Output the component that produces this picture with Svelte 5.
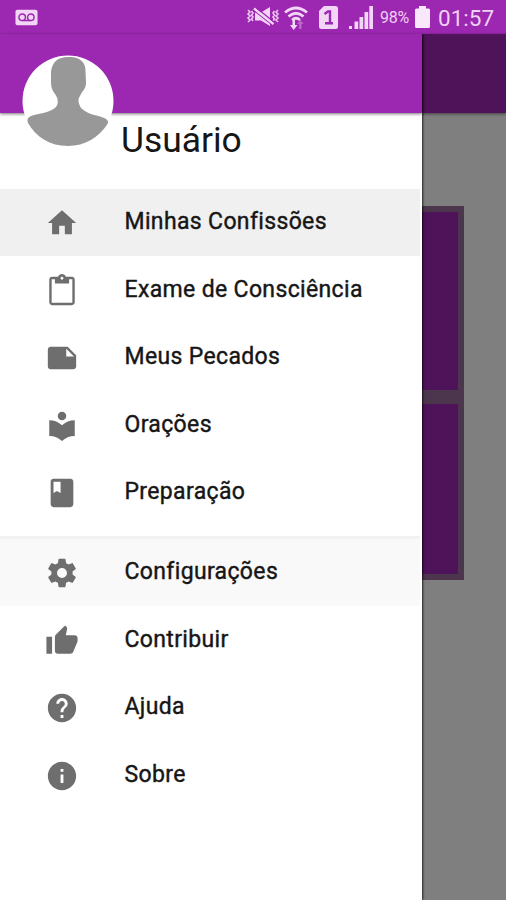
<script>
  const home = 'M10 20v-6h4v6h5v-8h3L12 3 2 12h3v8z';
  const clipboard =
    'M19 2h-4.180C14.400.840 13.300 0 12 0c-1.300 0-2.400.840-2.820 2H5c-1.100 0-2 .9-2 2v16c0 1.100.9 2 2 2h14c1.100 0 2-.9 2-2V4c0-1.100-.9-2-2-2zm-7 0c.55 0 1 .45 1 1s-.45 1-1 1-1-.45-1-1 .45-1 1-1zm7.300 18.300H4.700V3.700H7v3h10v-3h2.300z';
  const note = 'M22 10l-6-6H4c-1.100 0-2 .9-2 2v12.010c0 1.100.9 1.990 2 1.990l16-.01c1.100 0 2-.89 2-1.990v-8zm-7-4.500l5.500 5.500H15V5.500z';
  const reader =
    'M12 11.550C9.640 9.350 6.480 8 3 8v11c3.480 0 6.640 1.350 9 3.550 2.360-2.190 5.520-3.550 9-3.550V8c-3.480 0-6.640 1.350-9 3.550zM12 8c1.660 0 3-1.340 3-3s-1.340-3-3-3-3 1.340-3 3 1.340 3 3 3z';
  const book = 'M18 2H6c-1.100 0-2 .9-2 2v16c0 1.100.9 2 2 2h12c1.100 0 2-.9 2-2V4c0-1.100-.9-2-2-2zM6 4h5v8l-2.500-1.500L6 12V4z';
  const gear =
    'M19.430 12.980c.04-.32.070-.64.070-.98s-.03-.66-.07-.98l2.110-1.650c.19-.15.240-.42.120-.64l-2-3.460c-.12-.22-.39-.3-.61-.22l-2.490 1c-.52-.4-1.080-.73-1.690-.98l-.38-2.650C14.460 2.180 14.250 2 14 2h-4c-.25 0-.46.180-.49.420l-.38 2.650c-.61.250-1.170.590-1.690.980l-2.490-1c-.23-.09-.49 0-.61.220l-2 3.460c-.13.220-.07.490.120.640l2.110 1.650c-.04.320-.07.650-.07.980s.03.660.070.980l-2.110 1.650c-.19.150-.24.420-.12.640l2 3.460c.12.220.390.300.610.220l2.490-1c.52.400 1.080.730 1.690.980l.38 2.650c.03.240.240.420.490.420h4c.25 0 .46-.18.490-.42l.38-2.650c.61-.25 1.170-.59 1.690-.98l2.490 1c.23.090.490 0 .61-.22l2-3.460c.12-.22.070-.49-.12-.64l-2.110-1.650zM12 15.500c-1.930 0-3.500-1.570-3.500-3.500s1.570-3.500 3.500-3.500 3.500 1.570 3.500 3.500-1.570 3.500-3.500 3.500z';
  const thumb =
    'M1 21h4V9H1v12zm22-11c0-1.100-.9-2-2-2h-6.310l.95-4.570.03-.32c0-.41-.17-.79-.44-1.060L14.170 1 7.590 7.590C7.220 7.950 7 8.450 7 9v10c0 1.100.9 2 2 2h9c.83 0 1.540-.5 1.840-1.220l3.020-7.050c.09-.23.140-.47.140-.73v-2z';
  const help =
    'M12 2C6.480 2 2 6.480 2 12s4.480 10 10 10 10-4.480 10-10S17.520 2 12 2zm1 17h-2v-2h2v2zm2.070-7.750l-.9.920C13.450 12.900 13 13.500 13 15h-2v-.5c0-1.100.450-2.100 1.170-2.830l1.240-1.260c.37-.36.590-.86.590-1.410 0-1.100-.9-2-2-2s-2 .9-2 2H8c0-2.210 1.790-4 4-4s4 1.790 4 4c0 .88-.36 1.680-.93 2.250z';
  const info = 'M12 2C6.480 2 2 6.480 2 12s4.480 10 10 10 10-4.480 10-10S17.520 2 12 2zm1 15h-2v-6h2v6zm0-8h-2V7h2v2z';

  const mainItems = [
    { id: 'confissoes', label: 'Minhas Confissões', icon: home },
    { id: 'exame', label: 'Exame de Consciência', icon: clipboard },
    { id: 'pecados', label: 'Meus Pecados', icon: note },
    { id: 'oracoes', label: 'Orações', icon: reader },
    { id: 'preparacao', label: 'Preparação', icon: book }
  ];

  const otherItems = [
    { id: 'config', label: 'Configurações', icon: gear },
    { id: 'contribuir', label: 'Contribuir', icon: thumb },
    { id: 'ajuda', label: 'Ajuda', icon: help },
    { id: 'sobre', label: 'Sobre', icon: info }
  ];

  let active = $state('confissoes');
  let focused = $state('config');

  function select(id) {
    active = id;
    focused = '';
  }
</script>

{#snippet item(entry)}
  <button
    class="item"
    class:active={active === entry.id}
    class:focused={focused === entry.id}
    onclick={() => select(entry.id)}
  >
    <svg class="icon" viewBox="0 0 24 24"><path d={entry.icon} /></svg>
    <span>{entry.label}</span>
  </button>
{/snippet}

<div class="screen">
  <header class="status">
    <svg class="voicemail" viewBox="0 0 24 17">
      <rect x="0.500" y="0.500" width="23" height="16" rx="2" fill="#f3d5f7" />
      <g fill="none" stroke="#9c27b0" stroke-width="1.500">
        <circle cx="7.500" cy="8.300" r="3.400" />
        <circle cx="16.500" cy="8.300" r="3.400" />
        <path d="M7.500 11.700h9" />
      </g>
    </svg>
    <svg class="mute" viewBox="0 0 34 22">
      <g fill="none" stroke="#edc6f2" stroke-width="1.600">
        <path d="M2 4l2 2-2 2 2 2-2 2 2 2-2 2M5.500 5l1.500 2-1.500 2 1.500 2-1.500 2 1.500 2" />
        <path d="M32 4l-2 2 2 2-2 2 2 2-2 2 2 2M28.500 5L27 7l1.500 2-1.500 2 1.500 2-1.500 2" />
      </g>
      <path d="M9 6.500h6l9-5.500v19l-9-5.500H9z" fill="#f3d5f7" />
      <path d="M8 4.500l19 15" stroke="#9c27b0" stroke-width="1.300" />
      <path d="M8 2.500l19.500 15.500" stroke="#f3d5f7" stroke-width="2.300" />
      <path d="M10 1.500l18 14.500" stroke="#9c27b0" stroke-width="1.200" />
    </svg>
    <svg class="wifi" viewBox="0 0 24 24">
      <g fill="none" stroke="#f3d5f7" stroke-width="2.700">
        <path d="M1 6.500q11-9 22 0" />
        <path d="M4.500 10.500q7.500-6.500 15 0" />
        <path d="M8 14q4-3.500 8 0" />
      </g>
      <path d="M8.500 14h2.500v5h2.500L9.700 24 6 19h2.500z" fill="#f3d5f7" />
      <path d="M15 23v-5h-2l3.500-4 3 4h-2v5z" fill="#bd66ca" />
    </svg>
    <svg class="sim" viewBox="0 0 19 23">
      <path d="M5 0h11.500Q19 0 19 2.500v18Q19 23 16.500 23h-14Q0 23 0 20.500V5z" fill="#f3d5f7" />
      <path d="M5.500 8l3.500-2.500h2V17M6 17.300h8" fill="none" stroke="#9c27b0" stroke-width="2.400" />
    </svg>
    <svg class="signal" viewBox="0 0 24 23">
      <path d="M0 20h3v3H0zM5.500 15.500h3.700V23H5.500zM10.500 11h3.700v12h-3.700zM15.500 6h3.700v17h-3.700zM20.300 0H24v23h-3.700z" fill="#f3d5f7" />
    </svg>
    <span class="percent">98%</span>
    <svg class="battery" viewBox="0 0 15 22">
      <path d="M4 0h7v2.500h2.500Q15 2.500 15 4v16.500Q15 22 13.500 22h-12Q0 22 0 20.500V4Q0 2.500 1.500 2.500H4z" fill="#f9e8fb" />
    </svg>
    <time class="clock">01:57</time>
  </header>

  <main class="page">
    <div class="toolbar"></div>
    <div class="board">
      <div class="tile"></div>
      <div class="tile"></div>
    </div>
  </main>
  <div class="scrim"></div>

  <nav class="drawer">
    <div class="cover"></div>
    <div class="profile">
      <svg class="avatar" viewBox="0 0 92 92">
        <circle cx="46" cy="46" r="45.500" fill="#fff" />
        <path
          d="M46 2C57 1 64 7 63.500 16L64 28C64 34 60 36 58 41C55 45 57 49 59 53C67 61 78 60 84 64Q87 66 85.500 69C77 82 63 91 46 91C28 91 14 82 6 68Q4 63 9 61C17 58 28 58 34 52C37 48 36 43 33 39C30 35 29 32 29 27V17C30 7 36 2 46 2z"
          fill="#989898"
        />
      </svg>
      <h1>Usuário</h1>
    </div>

    <div class="group">
      {#each mainItems as entry}
        {@render item(entry)}
      {/each}
    </div>
    <div class="divider"></div>
    <div class="group">
      {#each otherItems as entry}
        {@render item(entry)}
      {/each}
    </div>
  </nav>
</div>

<style>
  :global(body) {
    margin: 0;
    background: #fff;
  }

  .screen {
    position: relative;
    width: 506px;
    height: 900px;
    overflow: hidden;
    display: flex;
    flex-direction: column;
    font-family: Roboto, sans-serif;
  }

  .status {
    flex: none;
    box-sizing: border-box;
    height: 34px;
    padding: 0 12px 0 15px;
    display: flex;
    align-items: center;
    background: #9c27b0;
    color: #f0d0f5;
  }

  .status svg {
    flex: none;
  }

  .voicemail {
    width: 23px;
    height: 17px;
  }

  .mute {
    width: 34px;
    height: 22px;
    margin-left: auto;
  }

  .wifi {
    width: 24px;
    height: 24px;
    margin: 2px 11px 0 4px;
  }

  .sim {
    width: 19px;
    height: 23px;
    margin-right: 11px;
  }

  .signal {
    width: 24px;
    height: 23px;
    margin-right: 7px;
  }

  .percent {
    width: 31px;
    font-size: 16px;
    letter-spacing: -0.2px;
    margin-top: 1px;
  }

  .battery {
    width: 15px;
    height: 22px;
    margin: 0 8px 0 4px;
  }

  .clock {
    width: 56px;
    margin-top: 1px;
    font-size: 22.5px;
    white-space: nowrap;
  }

  .page {
    flex: 1;
    background: #fff;
  }

  .toolbar {
    height: 79px;
    background: #9c27b0;
    box-shadow: 0 1px 3px rgba(0, 0, 0, 0.5);
  }

  .board {
    box-sizing: border-box;
    width: 422px;
    height: 374px;
    margin: 93px 0 0 42px;
    padding: 6px;
    display: flex;
    flex-direction: column;
    gap: 14px;
    background: #966d9d;
  }

  .tile {
    flex: 1;
    background: #9c27b0;
  }

  .tile:first-child {
    flex: 0 0 178px;
  }

  .scrim {
    position: absolute;
    inset: 34px 0 0;
    background: rgba(0, 0, 0, 0.5);
  }

  .drawer {
    position: absolute;
    top: 34px;
    bottom: 0;
    left: 0;
    width: 422px;
    display: flex;
    flex-direction: column;
    background: #fff;
    box-shadow: 1px 0 2px rgba(0, 0, 0, 0.7);
    clip-path: inset(0 -6px 0 0);
  }

  .cover {
    flex: none;
    height: 79px;
    background: #9c27b0;
    box-shadow: 0 1px 3px rgba(0, 0, 0, 0.55);
  }

  .profile {
    flex: none;
    height: 75.7px;
    padding-left: 22px;
    display: flex;
    align-items: flex-start;
  }

  .avatar {
    flex: none;
    position: relative;
    width: 92px;
    height: 92px;
    margin-top: -58px;
  }

  h1 {
    margin: 6px 0 0 7px;
    font-size: 35.4px;
    line-height: 42px;
    font-weight: 400;
    color: #161616;
  }

  .group {
    display: flex;
    flex-direction: column;
  }

  .item {
    height: 67.6px;
    margin: 0 2px 0 0;
    padding: 0 0 0 45px;
    display: flex;
    align-items: center;
    gap: 45.5px;
    border: 0;
    background: none;
    font-family: inherit;
    font-size: 23px;
    font-weight: 400;
    letter-spacing: 0.35px;
    -webkit-text-stroke: 0.4px #161616;
    color: #161616;
    text-align: left;
    cursor: pointer;
  }

  .item span {
    margin-top: -2px;
  }

  .item.active {
    background: #f0f0f0;
  }

  .item.focused {
    background: #f9f9f9;
  }

  .icon {
    flex: none;
    width: 34px;
    height: 34px;
    margin-top: 1px;
    fill: #6e6e6e;
  }

  .divider {
    flex: none;
    height: 3px;
    margin: 9.5px 2px 0 0;
    background: #f2f2f2;
  }

  .divider + .group {
    margin-top: -0.5px;
  }
</style>
